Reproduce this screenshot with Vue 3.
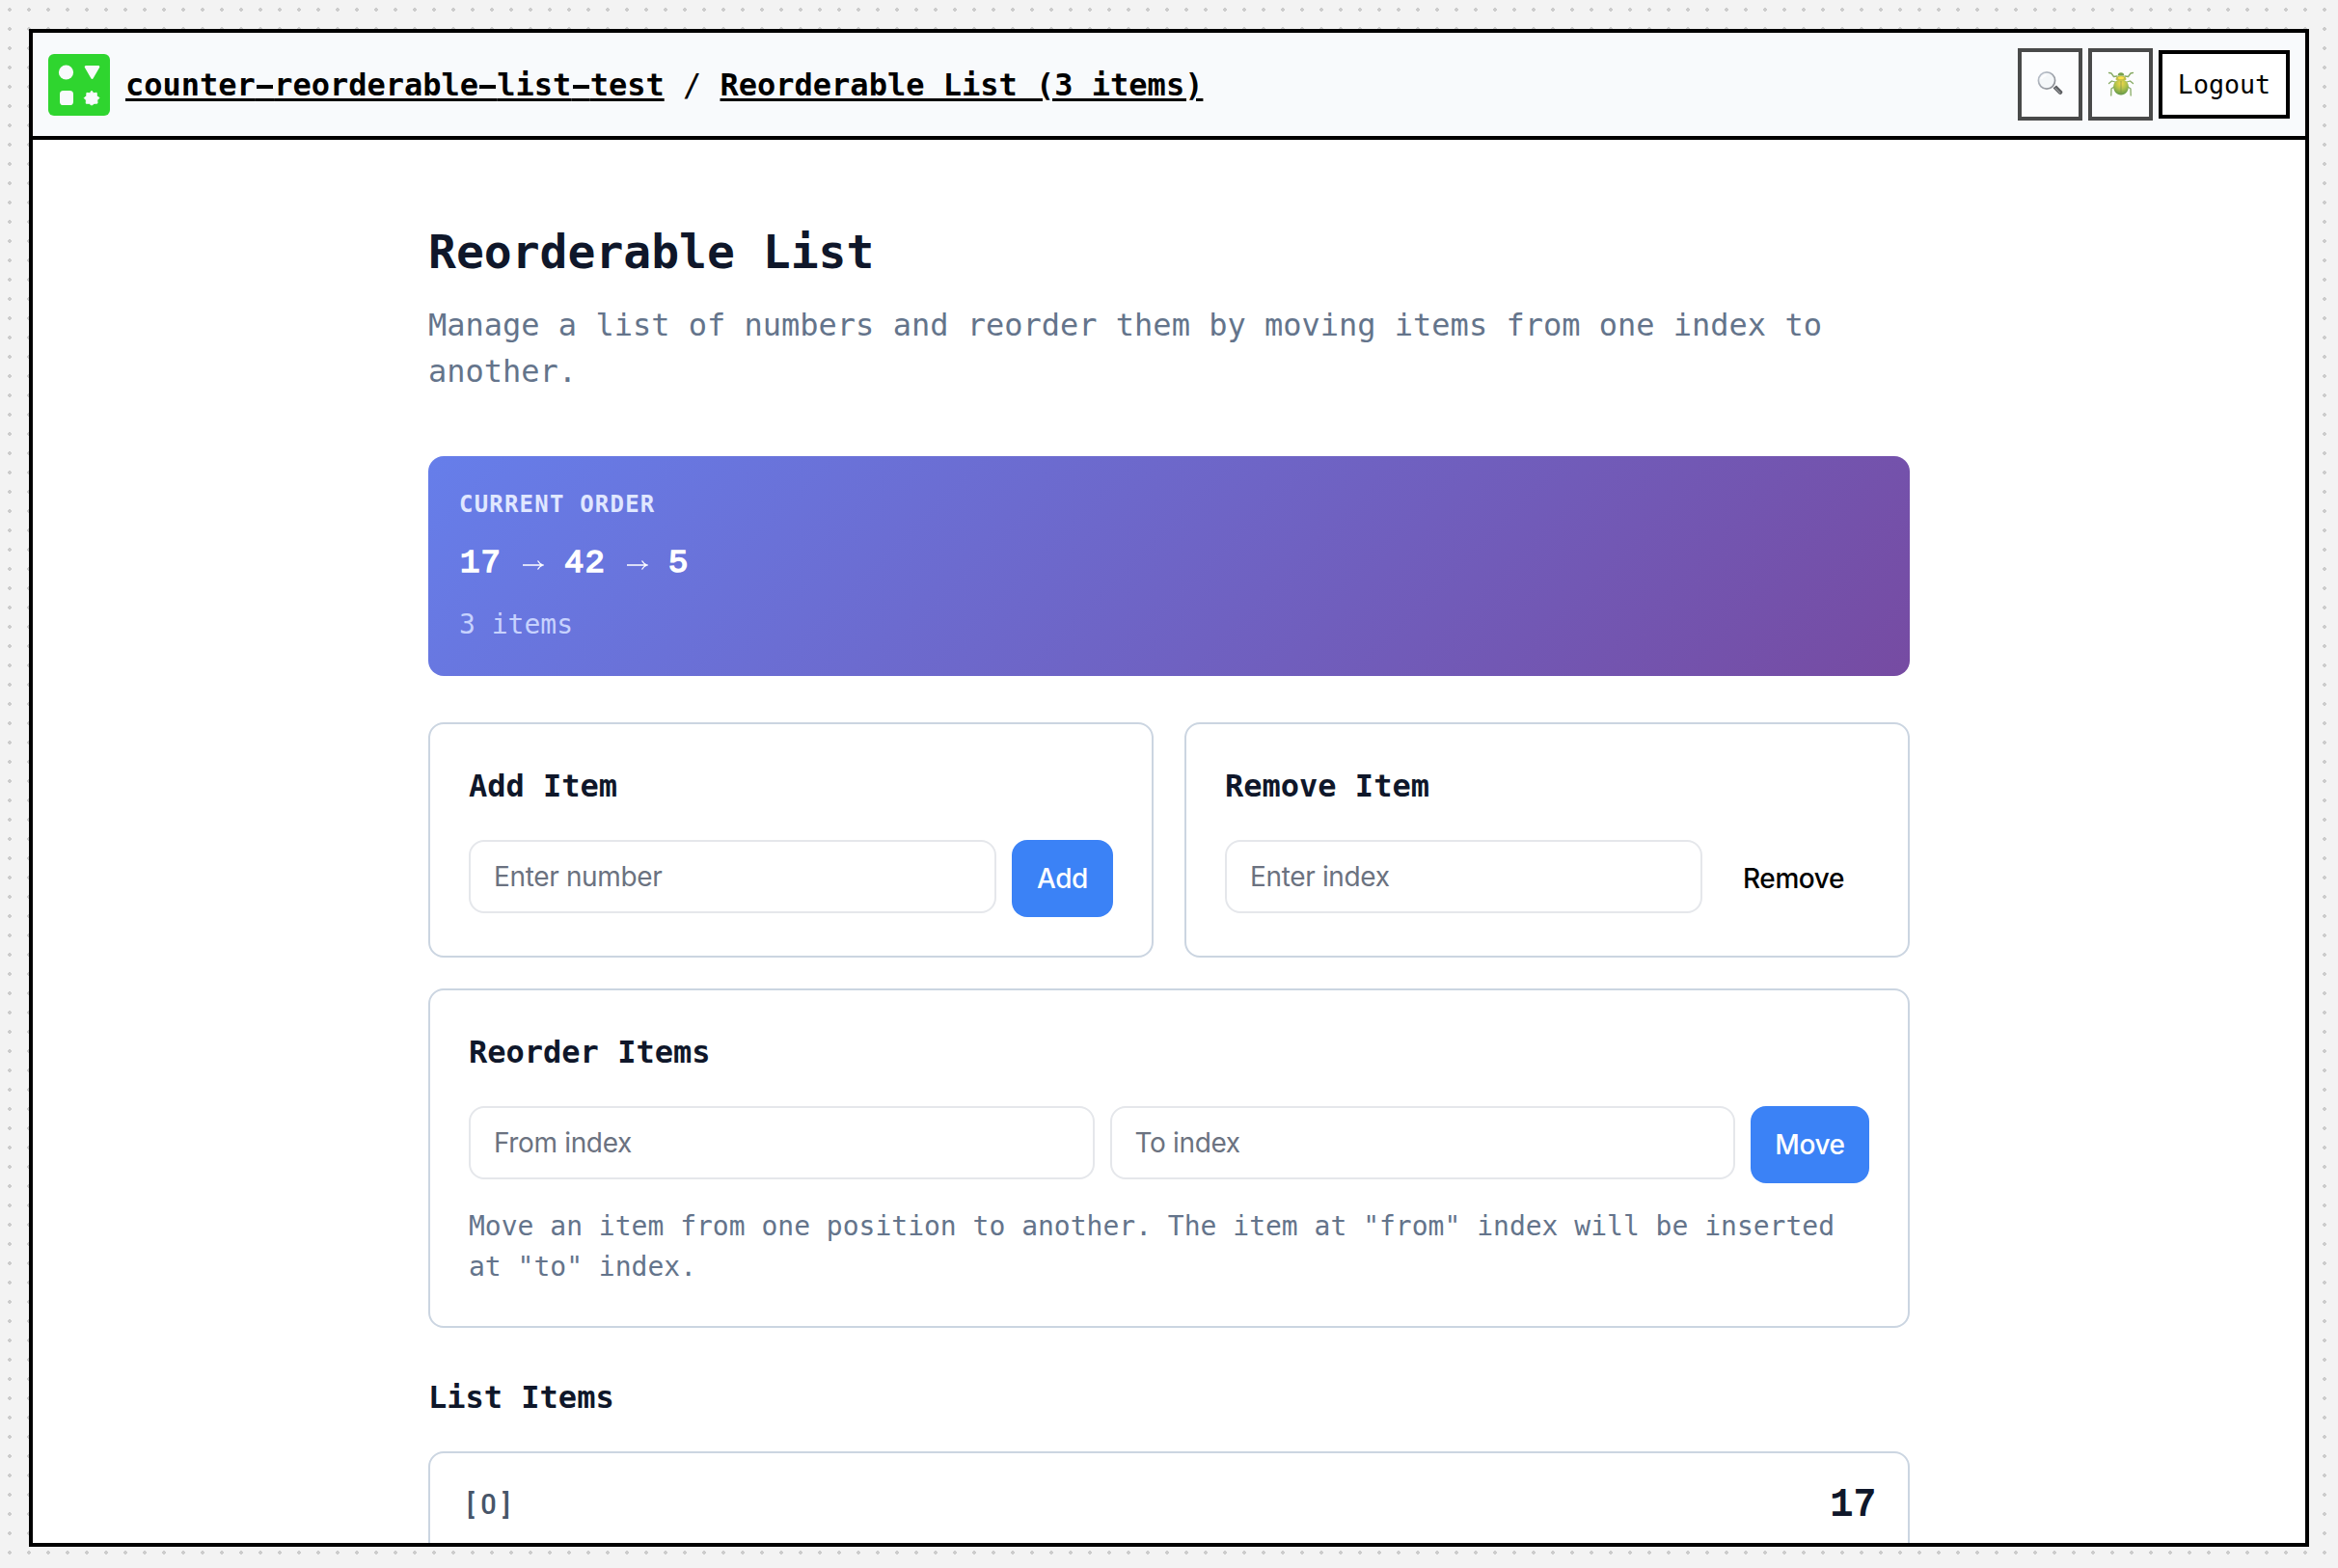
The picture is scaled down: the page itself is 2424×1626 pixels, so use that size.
<script setup>
const order = [17, 42, 5]
const projectParts = ['counter', 'reorderable', 'list', 'test']
</script>

<template>
  <div class="page">
    <div class="frame">
      <header class="topbar">
        <svg class="logo" viewBox="0 0 64 64">
          <rect width="64" height="64" rx="6" fill="#2fd52f" />
          <circle cx="18.5" cy="19" r="7.6" fill="#f8fafc" />
          <path d="M39 13.4H52L45.5 24.6Z" fill="#f8fafc" stroke="#f8fafc" stroke-width="2.6" stroke-linejoin="round" />
          <rect x="12" y="38" width="14" height="15" rx="3.6" fill="#f8fafc" />
          <path d="M45 38.2l2 2.5 3.2-.5.1 3.3 2.7 2-2.2 2.3.2 3.3-3.2.2-2.8 1.8-2.6-1.8-3.2-.1.2-3.3-2.2-2.3 2.6-2 .1-3.3 3.2.5z" fill="#f8fafc" stroke="#f8fafc" stroke-linejoin="round" />
        </svg>
        <nav class="crumbs"><a><template v-for="(part, i) in projectParts" :key="part"><span v-if="i" class="dash">-</span>{{ part }}</template></a> / <a>Reorderable List (3 items)</a></nav>
        <div class="tools">
          <button class="icon-btn">
            <svg viewBox="0 0 28 28" width="28" height="28">
              <defs>
                <linearGradient id="rim" x1="0" y1="0" x2="1" y2="1">
                  <stop offset="0" stop-color="#a9b3c2" /><stop offset="1" stop-color="#55585e" />
                </linearGradient>
              </defs>
              <path d="M17 18l3-2.5 6 6c1.4 1.7-1.5 4.6-3.3 3.1l-6-6.2z" fill="#1c1e22" />
              <path d="M18.7 18.2l5.4 5.5" stroke="#75777c" stroke-width="1.1" />
              <circle cx="10" cy="10.5" r="8.6" fill="#f3f6f8" stroke="url(#rim)" stroke-width="1.7" />
              <path d="M4.5 9a6 6 0 0 1 5-4" fill="none" stroke="#fff" stroke-width="2" />
            </svg>
          </button>
          <button class="icon-btn">
            <svg viewBox="0 0 28 28" width="28" height="28">
              <defs>
                <radialGradient id="shell" cx=".5" cy=".25" r=".75">
                  <stop offset="0" stop-color="#f5cb00" /><stop offset=".5" stop-color="#93ab00" /><stop offset="1" stop-color="#1f7000" />
                </radialGradient>
              </defs>
              <g fill="none" stroke="#588a26" stroke-width="1.3" stroke-linejoin="round" stroke-linecap="round">
                <path d="M10 6L6.5 6.5 4 3 1.500 2.5M18 6l3.500.5L24 3l2.500-.5" />
                <path d="M8 12L4.500 11 1.500 13.500M20 12l3.500-1L26.500 13.500" />
                <path d="M7 17l-3 2-.2 7M21 17l3 2 .2 7" />
              </g>
              <path d="M14 9.500c5 0 7.800 3 7.800 7.500 0 4.800-3.300 8.500-7.800 8.500S6.200 21.800 6.200 17c0-4.500 2.800-7.500 7.800-7.500z" fill="url(#shell)" />
              <path d="M8.500 9.500C8.500 6.800 11 5.500 14 5.500s5.500 1.300 5.500 4c-1.500 1.200-9.500 1.200-11 0z" fill="#aaa500" />
              <ellipse cx="14" cy="7.800" rx="3" ry="1.500" fill="#ffd800" />
              <path d="M10.700 5.500C10.700 3 12 2.200 14 2.200s3.300.8 3.300 3.300z" fill="#3f7a00" />
              <path d="M14 11v14" stroke="#4f6a00" stroke-width=".8" />
            </svg>
          </button>
          <button class="logout">Logout</button>
        </div>
      </header>

      <main class="content">
        <h1>Reorderable List</h1>
        <p class="lead">Manage a list of numbers and reorder them by moving items from one index to another.</p>

        <section class="summary">
          <div class="label">CURRENT ORDER</div>
          <div class="order">
            <template v-for="(n, i) in order" :key="n"><span v-if="i" class="arrow"><svg viewBox="0 0 22 12" width="22" height="12"><path d="M0 6H21M15.500 1.500Q17.500 5 21 6Q17.500 7 15.500 10.500" fill="none" stroke="#fff" stroke-width="1.300" /></svg></span>{{ n }}</template>
          </div>
          <div class="count">3 items</div>
        </section>

        <div class="pair">
          <section class="card">
            <h2>Add Item</h2>
            <div class="row">
              <input placeholder="Enter number" />
              <button class="btn primary add">Add</button>
            </div>
          </section>
          <section class="card">
            <h2>Remove Item</h2>
            <div class="row">
              <input placeholder="Enter index" />
              <button class="btn remove">Remove</button>
            </div>
          </section>
        </div>

        <section class="card reorder">
          <h2>Reorder Items</h2>
          <div class="row">
            <input placeholder="From index" />
            <input placeholder="To index" />
            <button class="btn primary move">Move</button>
          </div>
          <p class="hint">Move an item from one position to another. The item at "from" index will be inserted at "to" index.</p>
        </section>

        <h2 class="list-title">List Items</h2>
        <div class="item">
          <span class="index">[0]</span>
          <span class="value">17</span>
        </div>
      </main>
    </div>
  </div>
</template>

<style>
body {
  margin: 0;
  overflow: hidden;
}
</style>

<style scoped>
* {
  box-sizing: border-box;
}
.page {
  width: 2424px;
  height: 1626px;
  padding: 30px 30px 22px;
  background: #f3f3f3 radial-gradient(circle at 10px 10px, #ccc 2px, transparent 2px) 0 0 / 20px 20px;
  font-family: "DejaVu Sans Mono", monospace;
  font-size: 32px;
}
.frame {
  height: 1574px;
  border: 4px solid #000;
  background: #fff;
  overflow: hidden;
}
.topbar {
  height: 111px;
  padding: 0 16px;
  display: flex;
  align-items: center;
  background: #f8fafc;
  border-bottom: 4px solid #000;
}
.logo {
  width: 64px;
  height: 64px;
  margin-right: 16px;
}
.crumbs {
  white-space: pre;
  line-height: 48px;
  color: #000;
}
.crumbs a {
  font-weight: 700;
  text-decoration: underline;
  text-decoration-thickness: 3px;
  text-underline-offset: 3px;
}
.dash {
  color: transparent;
  background: linear-gradient(#000, #000) center 19px / 17px 4px no-repeat;
}
.tools {
  margin-left: auto;
  display: flex;
  align-items: center;
  gap: 6px;
}
button {
  padding: 0;
  border: 0;
  background: none;
  color: #000;
}
.icon-btn {
  width: 67px;
  height: 75px;
  border: 4px solid #000;
  background: #fff;
  opacity: 0.7;
  display: flex;
  align-items: center;
  justify-content: center;
}
.icon-btn svg {
  margin-top: -2px;
}
.logout {
  width: 136px;
  height: 71px;
  border: 4px solid #000;
  background: #fff;
  font: 26.67px "DejaVu Sans Mono", monospace;
}
.content {
  width: 1536px;
  margin: 0 auto;
  padding-top: 80px;
}
h1, h2, p {
  margin: 0;
}
h1 {
  font-size: 48px;
  line-height: 72px;
  color: #0f172a;
}
h2 {
  font-size: 32px;
  line-height: 48px;
  color: #0f172a;
}
.lead {
  margin: 16px 0 64px;
  line-height: 48px;
  color: #64748b;
}
.summary {
  height: 228px;
  padding: 32px;
  display: flex;
  flex-direction: column;
  gap: 16px;
  border-radius: 16px;
  background: linear-gradient(135deg, #667eea 0%, #764ba2 100%);
}
.label {
  font-size: 24px;
  line-height: 36px;
  font-weight: 700;
  letter-spacing: 1.2px;
  color: #e0e7ff;
}
.order {
  display: flex;
  padding-left: 1px;
  font: 400 34px/54px "Liberation Mono", monospace;
  letter-spacing: 1.2px;
  -webkit-text-stroke: 1.6px #fff;
  color: #fff;
}
.arrow {
  width: 64.8px;
  display: flex;
  align-items: center;
  justify-content: center;
  padding-top: 4px;
}
.count {
  font-size: 28px;
  line-height: 42px;
  color: #c7d2fe;
}
.pair {
  display: grid;
  grid-template-columns: 1fr 1fr;
  gap: 32px;
  margin: 48px 0 32px;
}
.card {
  padding: 40px;
  border: 2px solid #cbd5e1;
  border-radius: 16px;
}
.row {
  display: flex;
  align-items: flex-start;
  gap: 16px;
  margin-top: 32px;
}
input {
  flex: 1;
  min-width: 0;
  height: 76px;
  padding: 0 24px;
  border: 2px solid #e5e7eb;
  border-radius: 16px;
  background: #fff;
  font: 28px Inter, sans-serif;
  letter-spacing: -0.35px;
}
input::placeholder {
  color: #6b7280;
  opacity: 1;
}
.btn {
  height: 80px;
  border-radius: 16px;
  font: 500 28px Inter, sans-serif;
  letter-spacing: -0.4px;
}
.primary {
  background: #3b82f6;
  color: #fff;
}
.add {
  width: 105px;
}
.remove {
  width: 157px;
}
.move {
  width: 123px;
}
.hint {
  margin-top: 24px;
  font-size: 28px;
  line-height: 42px;
  color: #64748b;
}
.list-title {
  margin: 48px 0 32px;
}
.item {
  height: 112px;
  padding: 24px 32px;
  display: flex;
  align-items: center;
  justify-content: space-between;
  border: 2px solid #cbd5e1;
  border-radius: 16px;
}
.index {
  font: 500 29px/42px Roboto, sans-serif;
  letter-spacing: 6.3px;
  padding: 0 0 2px 6px;
  color: #475569;
}
.value {
  font: 400 38px/60px "Liberation Mono", monospace;
  letter-spacing: 1.2px;
  -webkit-text-stroke: 1.8px #0f172a;
  color: #0f172a;
}
</style>
